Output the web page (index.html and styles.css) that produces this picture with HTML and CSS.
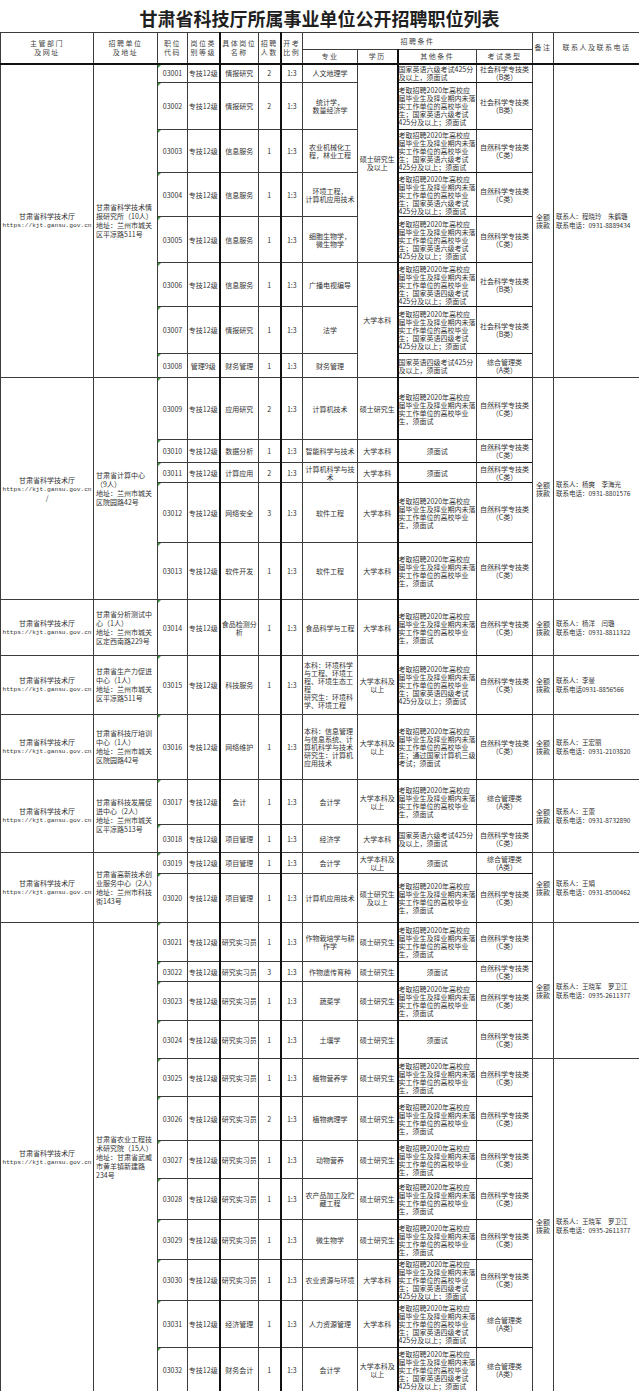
FILE: index.html
```html
<!DOCTYPE html>
<html lang="zh-CN">
<head>
<meta charset="utf-8">
<title>甘肃省科技厅所属事业单位公开招聘职位列表</title>
<link rel="stylesheet" href="styles.css">
</head>
<body>
<div class="page">
<div class="title">甘肃省科技厅所属事业单位公开招聘职位列表</div>
<table class="jobs">
<colgroup>
<col class="c-dept"><col class="c-unit"><col class="c-code"><col class="c-level"><col class="c-name"><col class="c-num"><col class="c-ratio"><col class="c-major"><col class="c-edu"><col class="c-cond"><col class="c-exam"><col class="c-note"><col class="c-contact">
</colgroup>
<thead>
<tr class="h17"><th rowspan="2">主管部门<br>及网址</th><th rowspan="2">招聘单位<br>及地址</th><th rowspan="2">职位<br>代码</th><th rowspan="2">岗位类<br>别等级</th><th rowspan="2">具体岗位<br>名称</th><th rowspan="2">招聘<br>人数</th><th rowspan="2">开考<br>比例</th><th colspan="4">招聘条件</th><th rowspan="2">备注</th><th rowspan="2">联系人及联系电话</th></tr>
<tr class="h14"><th>专业</th><th>学历</th><th>其他条件</th><th>考试类型</th></tr>
</thead>
<tbody>
<!-- group 1 -->
<tr class="h19">
<td class="dept" rowspan="8">甘肃省科学技术厅<br><span class="url">https://kjt.gansu.gov.cn</span></td>
<td class="unit" rowspan="8">甘肃省科学技术情报研究所（10人）<br>地址：兰州市城关区平凉路511号</td>
<td class="code">03001</td><td>专技12级</td><td>情报研究</td><td>2</td><td>1:3</td><td>人文地理学</td>
<td rowspan="5">硕士研究生<br>及以上</td>
<td class="cond">国家英语六级考试425分及以上，须面试</td><td class="exam">社会科学专技类<br>（B类）</td>
<td class="note" rowspan="8">全额<br>拨款</td>
<td class="contact" rowspan="8">联系人：程晓玲　朱鹤璐<br>联系电话：0931-8889434</td>
</tr>
<tr class="h47"><td class="code">03002</td><td>专技12级</td><td>情报研究</td><td>2</td><td>1:3</td><td>统计学，<br>数量经济学</td><td class="cond">考取招聘2020年高校应届毕业生及择业期内未落实工作单位的高校毕业生；国家英语六级考试425分及以上；须面试</td><td class="exam">社会科学专技类<br>（B类）</td></tr>
<tr class="h43"><td class="code">03003</td><td>专技12级</td><td>信息服务</td><td>1</td><td>1:3</td><td>农业机械化工程，林业工程</td><td class="cond">考取招聘2020年高校应届毕业生及择业期内未落实工作单位的高校毕业生；国家英语六级考试425分及以上；须面试</td><td class="exam">自然科学专技类<br>（C类）</td></tr>
<tr class="h44"><td class="code">03004</td><td>专技12级</td><td>信息服务</td><td>1</td><td>1:3</td><td>环境工程，<br>计算机应用技术</td><td class="cond">考取招聘2020年高校应届毕业生及择业期内未落实工作单位的高校毕业生；国家英语六级考试425分及以上；须面试</td><td class="exam">自然科学专技类<br>（C类）</td></tr>
<tr class="h46"><td class="code">03005</td><td>专技12级</td><td>信息服务</td><td>1</td><td>1:3</td><td>细胞生物学，<br>微生物学</td><td class="cond">考取招聘2020年高校应届毕业生及择业期内未落实工作单位的高校毕业生；国家英语六级考试425分及以上；须面试</td><td class="exam">自然科学专技类<br>（C类）</td></tr>
<tr class="h44"><td class="code">03006</td><td>专技12级</td><td>信息服务</td><td>1</td><td>1:3</td><td>广播电视编导</td><td rowspan="3">大学本科</td><td class="cond">考取招聘2020年高校应届毕业生及择业期内未落实工作单位的高校毕业生；国家英语四级考试425分及以上；须面试</td><td class="exam">社会科学专技类<br>（B类）</td></tr>
<tr class="h47"><td class="code">03007</td><td>专技12级</td><td>情报研究</td><td>1</td><td>1:3</td><td>法学</td><td class="cond">考取招聘2020年高校应届毕业生及择业期内未落实工作单位的高校毕业生；国家英语四级考试425分及以上；须面试</td><td class="exam">社会科学专技类<br>（B类）</td></tr>
<tr class="h24"><td class="code">03008</td><td>管理9级</td><td>财务管理</td><td>1</td><td>1:3</td><td>财务管理</td><td class="cond">国家英语四级考试425分及以上，须面试</td><td class="exam">综合管理类<br>（A类）</td></tr>
<!-- group 2 -->
<tr class="h62">
<td class="dept" rowspan="5">甘肃省科学技术厅<br><span class="url">https://kjt.gansu.gov.cn</span><br>/</td>
<td class="unit" rowspan="5">甘肃省计算中心<br>（9人）<br>地址：兰州市城关区院园路42号</td>
<td class="code">03009</td><td>专技12级</td><td>应用研究</td><td>2</td><td>1:3</td><td>计算机技术</td><td>硕士研究生</td><td class="cond">考取招聘2020年高校应届毕业生及择业期内未落实工作单位的高校毕业生，须面试</td><td class="exam">自然科学专技类<br>（C类）</td>
<td class="note" rowspan="5">全额<br>拨款</td>
<td class="contact" rowspan="5">联系人：杨爽　李海光<br>联系电话：0931-8801576</td>
</tr>
<tr class="h23"><td class="code">03010</td><td>专技12级</td><td>数据分析</td><td>1</td><td>1:3</td><td>智能科学与技术</td><td>大学本科</td><td class="cond center">须面试</td><td class="exam">自然科学专技类<br>（C类）</td></tr>
<tr class="h20"><td class="code">03011</td><td>专技12级</td><td>计算应用</td><td>2</td><td>1:3</td><td>计算机科学与技术</td><td>大学本科</td><td class="cond center">须面试</td><td class="exam">自然科学专技类<br>（C类）</td></tr>
<tr class="h60"><td class="code">03012</td><td>专技12级</td><td>网络安全</td><td>3</td><td>1:3</td><td>软件工程</td><td>大学本科</td><td class="cond">考取招聘2020年高校应届毕业生及择业期内未落实工作单位的高校毕业生，须面试</td><td class="exam">自然科学专技类<br>（C类）</td></tr>
<tr class="h57"><td class="code">03013</td><td>专技12级</td><td>软件开发</td><td>1</td><td>1:3</td><td>软件工程</td><td>大学本科</td><td class="cond">考取招聘2020年高校应届毕业生及择业期内未落实工作单位的高校毕业生，须面试</td><td class="exam">自然科学专技类<br>（C类）</td></tr>
<!-- group 3 -->
<tr class="h56">
<td class="dept">甘肃省科学技术厅<br><span class="url">https://kjt.gansu.gov.cn</span></td>
<td class="unit">甘肃省分析测试中心（1人）<br>地址：兰州市城关区定西南路229号</td>
<td class="code">03014</td><td>专技12级</td><td>食品检测分析</td><td>1</td><td>1:3</td><td>食品科学与工程</td><td>大学本科</td><td class="cond">考取招聘2020年高校应届毕业生及择业期内未落实工作单位的高校毕业生，须面试</td><td class="exam">自然科学专技类<br>（C类）</td>
<td class="note">全额<br>拨款</td>
<td class="contact">联系人：杨洋　闫璐<br>联系电话：0931-8811322</td>
</tr>
<!-- group 4 -->
<tr class="h59">
<td class="dept">甘肃省科学技术厅<br><span class="url">https://kjt.gansu.gov.cn</span></td>
<td class="unit">甘肃省生产力促进中心（1人）<br>地址：兰州市城关区平凉路511号</td>
<td class="code">03015</td><td>专技12级</td><td>科技服务</td><td>1</td><td>1:3</td><td class="major-long">本科：环境科学与工程、环境工程、环境生态工程<br>研究生：环境科学、环境工程</td><td>大学本科及以上</td><td class="cond">考取招聘2020年高校应届毕业生及择业期内未落实工作单位的高校毕业生；国家英语四级考试425分及以上；须面试</td><td class="exam">自然科学专技类<br>（C类）</td>
<td class="note">全额<br>拨款</td>
<td class="contact">联系人：李曼<br>联系电话0931-8856566</td>
</tr>
<!-- group 5 -->
<tr class="h65">
<td class="dept">甘肃省科学技术厅<br><span class="url">https://kjt.gansu.gov.cn</span></td>
<td class="unit">甘肃省科技厅培训中心（1人）<br>地址：兰州市城关区院园路42号</td>
<td class="code">03016</td><td>专技12级</td><td>网络维护</td><td>1</td><td>1:3</td><td class="major-long">本科：信息管理与信息系统、计算机科学与技术<br>研究生：计算机应用技术</td><td>大学本科及以上</td><td class="cond">考取招聘2020年高校应届毕业生及择业期内未落实工作单位的高校毕业生；通过国家计算机三级考试；须面试</td><td class="exam">自然科学专技类<br>（C类）</td>
<td class="note">全额<br>拨款</td>
<td class="contact">联系人：王宏丽<br>联系电话：0931-2103820</td>
</tr>
<!-- group 6 -->
<tr class="h45">
<td class="dept" rowspan="2">甘肃省科学技术厅<br><span class="url">https://kjt.gansu.gov.cn</span></td>
<td class="unit" rowspan="2">甘肃省科技发展促进中心（2人）<br>地址：兰州市城关区平凉路513号</td>
<td class="code">03017</td><td>专技12级</td><td>会计</td><td>1</td><td>1:3</td><td>会计学</td><td>大学本科及以上</td><td class="cond">考取招聘2020年高校应届毕业生及择业期内未落实工作单位的高校毕业生，须面试</td><td class="exam">综合管理类<br>（A类）</td>
<td class="note" rowspan="2">全额<br>拨款</td>
<td class="contact" rowspan="2">联系人：王蕾<br>联系电话：0931-8732890</td>
</tr>
<tr class="h28"><td class="code">03018</td><td>专技12级</td><td>项目管理</td><td>1</td><td>1:3</td><td>经济学</td><td>大学本科</td><td class="cond">国家英语六级考试425分及以上，须面试</td><td class="exam">自然科学专技类<br>（C类）</td></tr>
<!-- group 7 -->
<tr class="h21">
<td class="dept" rowspan="2">甘肃省科学技术厅<br><span class="url">https://kjt.gansu.gov.cn</span></td>
<td class="unit" rowspan="2">甘肃省高新技术创业服务中心（2人）<br>地址：兰州市科技街143号</td>
<td class="code">03019</td><td>专技12级</td><td>项目管理</td><td>1</td><td>1:3</td><td>会计学</td><td>大学本科及以上</td><td class="cond center">须面试</td><td class="exam">综合管理类<br>（A类）</td>
<td class="note" rowspan="2">全额<br>拨款</td>
<td class="contact" rowspan="2">联系人：王娟<br>联系电话：0931-8500462</td>
</tr>
<tr class="h49"><td class="code">03020</td><td>专技12级</td><td>项目管理</td><td>1</td><td>1:3</td><td>计算机应用技术</td><td>硕士研究生<br>及以上</td><td class="cond">考取招聘2020年高校应届毕业生及择业期内未落实工作单位的高校毕业生，须面试</td><td class="exam">自然科学专技类<br>（C类）</td></tr>
<!-- group 8 -->
<tr class="h39">
<td class="dept" rowspan="12">甘肃省科学技术厅<br><span class="url">https://kjt.gansu.gov.cn</span></td>
<td class="unit" rowspan="12">甘肃省农业工程技术研究院（15人）<br>地址：甘肃省武威市黄羊镇新建路234号</td>
<td class="code">03021</td><td>专技12级</td><td>研究实习员</td><td>1</td><td>1:3</td><td>作物栽培学与耕作学</td><td>硕士研究生</td><td class="cond">考取招聘2020年高校应届毕业生及择业期内未落实工作单位的高校毕业生，须面试</td><td class="exam">自然科学专技类<br>（C类）</td>
<td class="note" rowspan="4">全额<br>拨款</td>
<td class="contact" rowspan="4">联系人：王晓军　罗卫江<br>联系电话：0935-2611377</td>
</tr>
<tr class="h20"><td class="code">03022</td><td>专技12级</td><td>研究实习员</td><td>3</td><td>1:3</td><td>作物遗传育种</td><td>硕士研究生</td><td class="cond center">须面试</td><td class="exam">自然科学专技类<br>（C类）</td></tr>
<tr class="h39"><td class="code">03023</td><td>专技12级</td><td>研究实习员</td><td>1</td><td>1:3</td><td>蔬菜学</td><td>硕士研究生</td><td class="cond">考取招聘2020年高校应届毕业生及择业期内未落实工作单位的高校毕业生，须面试</td><td class="exam">自然科学专技类<br>（C类）</td></tr>
<tr class="h38"><td class="code">03024</td><td>专技12级</td><td>研究实习员</td><td>1</td><td>1:3</td><td>土壤学</td><td>硕士研究生</td><td class="cond center">须面试</td><td class="exam">自然科学专技类<br>（C类）</td></tr>
<tr class="h38"><td class="code">03025</td><td>专技12级</td><td>研究实习员</td><td>1</td><td>1:3</td><td>植物营养学</td><td>硕士研究生</td><td class="cond">考取招聘2020年高校应届毕业生及择业期内未落实工作单位的高校毕业生，须面试</td><td class="exam">自然科学专技类<br>（C类）</td>
<td class="note" rowspan="8">全额<br>拨款</td>
<td class="contact" rowspan="8">联系人：王晓军　罗卫江<br>联系电话：0935-2611377</td>
</tr>
<tr class="h44"><td class="code">03026</td><td>专技12级</td><td>研究实习员</td><td>2</td><td>1:3</td><td>植物病理学</td><td>硕士研究生</td><td class="cond">考取招聘2020年高校应届毕业生及择业期内未落实工作单位的高校毕业生，须面试</td><td class="exam">自然科学专技类<br>（C类）</td></tr>
<tr class="h38"><td class="code">03027</td><td>专技12级</td><td>研究实习员</td><td>1</td><td>1:3</td><td>动物营养</td><td>硕士研究生</td><td class="cond">考取招聘2020年高校应届毕业生及择业期内未落实工作单位的高校毕业生，须面试</td><td class="exam">自然科学专技类<br>（C类）</td></tr>
<tr class="h41"><td class="code">03028</td><td>专技12级</td><td>研究实习员</td><td>1</td><td>1:3</td><td>农产品加工及贮藏工程</td><td>硕士研究生</td><td class="cond">考取招聘2020年高校应届毕业生及择业期内未落实工作单位的高校毕业生，须面试</td><td class="exam">自然科学专技类<br>（C类）</td></tr>
<tr class="h40"><td class="code">03029</td><td>专技12级</td><td>研究实习员</td><td>1</td><td>1:3</td><td>微生物学</td><td>硕士研究生</td><td class="cond">考取招聘2020年高校应届毕业生及择业期内未落实工作单位的高校毕业生，须面试</td><td class="exam">自然科学专技类<br>（C类）</td></tr>
<tr class="h39"><td class="code">03030</td><td>专技12级</td><td>研究实习员</td><td>1</td><td>1:3</td><td>农业资源与环境</td><td>大学本科</td><td class="cond">考取招聘2020年高校应届毕业生及择业期内未落实工作单位的高校毕业生；国家英语四级考试425分及以上；须面试</td><td class="exam">自然科学专技类<br>（C类）</td></tr>
<tr class="h47"><td class="code">03031</td><td>专技12级</td><td>经济管理</td><td>1</td><td>1:3</td><td>人力资源管理</td><td>大学本科</td><td class="cond">考取招聘2020年高校应届毕业生及择业期内未落实工作单位的高校毕业生；国家英语四级考试425分及以上；须面试</td><td class="exam">综合管理类<br>（A类）</td></tr>
<tr class="h45"><td class="code">03032</td><td>专技12级</td><td>财务会计</td><td>1</td><td>1:3</td><td>会计学</td><td>大学本科及以上</td><td class="cond">考取招聘2020年高校应届毕业生及择业期内未落实工作单位的高校毕业生；国家英语四级考试425分及以上；须面试</td><td class="exam">综合管理类<br>（A类）</td></tr>
</tbody>
</table>
</div>
</body>
</html>
```
FILE: styles.css
```css
html, body {
  margin: 0;
  padding: 0;
  background: #fff;
}
body {
  font-family: "Noto Sans CJK SC", "Liberation Sans", sans-serif;
  color: #333;
}
.page {
  width: 639px;
}
.title {
  height: 32px;
  line-height: 36px;
  text-align: center;
  font-family: "Noto Sans CJK SC", sans-serif;
  font-size: 18px;
  font-weight: bold;
  color: #1f1f1f;
}
.jobs {
  width: 639px;
  border-collapse: collapse;
  table-layout: fixed;
  font-size: 7px;
  line-height: 8px;
}
.c-dept { width: 93px; }
.c-unit { width: 64px; }
.c-code { width: 30px; }
.c-level { width: 32px; }
.c-name { width: 39px; border-left: 2px solid #111; }
.c-num { width: 22px; }
.c-ratio { width: 22px; border-left: 2px solid #111; }
.c-major { width: 55px; }
.c-edu { width: 40px; }
.c-cond { width: 79px; border-left: 2px solid #111; }
.c-exam { width: 56px; }
.c-note { width: 21px; }
.c-contact { width: 86px; }

.jobs th, .jobs td {
  border: 1px solid #3c3c3c;
  padding: 0;
  text-align: center;
  vertical-align: middle;
  font-weight: normal;
  overflow: hidden;
}
.jobs th {
  letter-spacing: 1.5px;
  line-height: 9px;
  color: #444;
}
.jobs thead tr:last-child th,
.jobs thead th[rowspan] {
  border-bottom: 2px solid #111;
}
.jobs td.code {
  position: relative;
}
.jobs td.code::before {
  content: "";
  position: absolute;
  left: 0;
  top: 0;
  border-top: 3px solid #3f9a3f;
  border-right: 3px solid transparent;
}
.url {
  font-family: "Liberation Mono", monospace;
  font-size: 6.2px;
  white-space: nowrap;
}
.jobs td.unit {
  text-align: left;
  line-height: 9px;
  padding: 0 1px 0 2px;
}
.jobs td.cond {
  text-align: left;
  border-top: 1px solid #111;
  border-bottom: 1px solid #111;
}
.jobs td.cond.center {
  text-align: center;
}
.jobs td.exam {
  border-top: 1px solid #111;
  border-bottom: 1px solid #111;
}
.jobs td.major-long {
  text-align: left;
  padding-left: 1px;
}
.jobs td.contact {
  text-align: left;
  font-size: 6.5px;
  line-height: 9px;
  padding: 0 0 0 2px;
}

.h14 { height: 14px; }
.h17 { height: 17px; }
.h19 { height: 19px; }
.h20 { height: 20px; }
.h21 { height: 21px; }
.h23 { height: 23px; }
.h24 { height: 24px; }
.h28 { height: 28px; }
.h38 { height: 38px; }
.h39 { height: 39px; }
.h40 { height: 40px; }
.h41 { height: 41px; }
.h43 { height: 43px; }
.h44 { height: 44px; }
.h45 { height: 45px; }
.h46 { height: 46px; }
.h47 { height: 47px; }
.h49 { height: 49px; }
.h56 { height: 56px; }
.h57 { height: 57px; }
.h59 { height: 59px; }
.h60 { height: 60px; }
.h62 { height: 62px; }
.h65 { height: 65px; }
```
